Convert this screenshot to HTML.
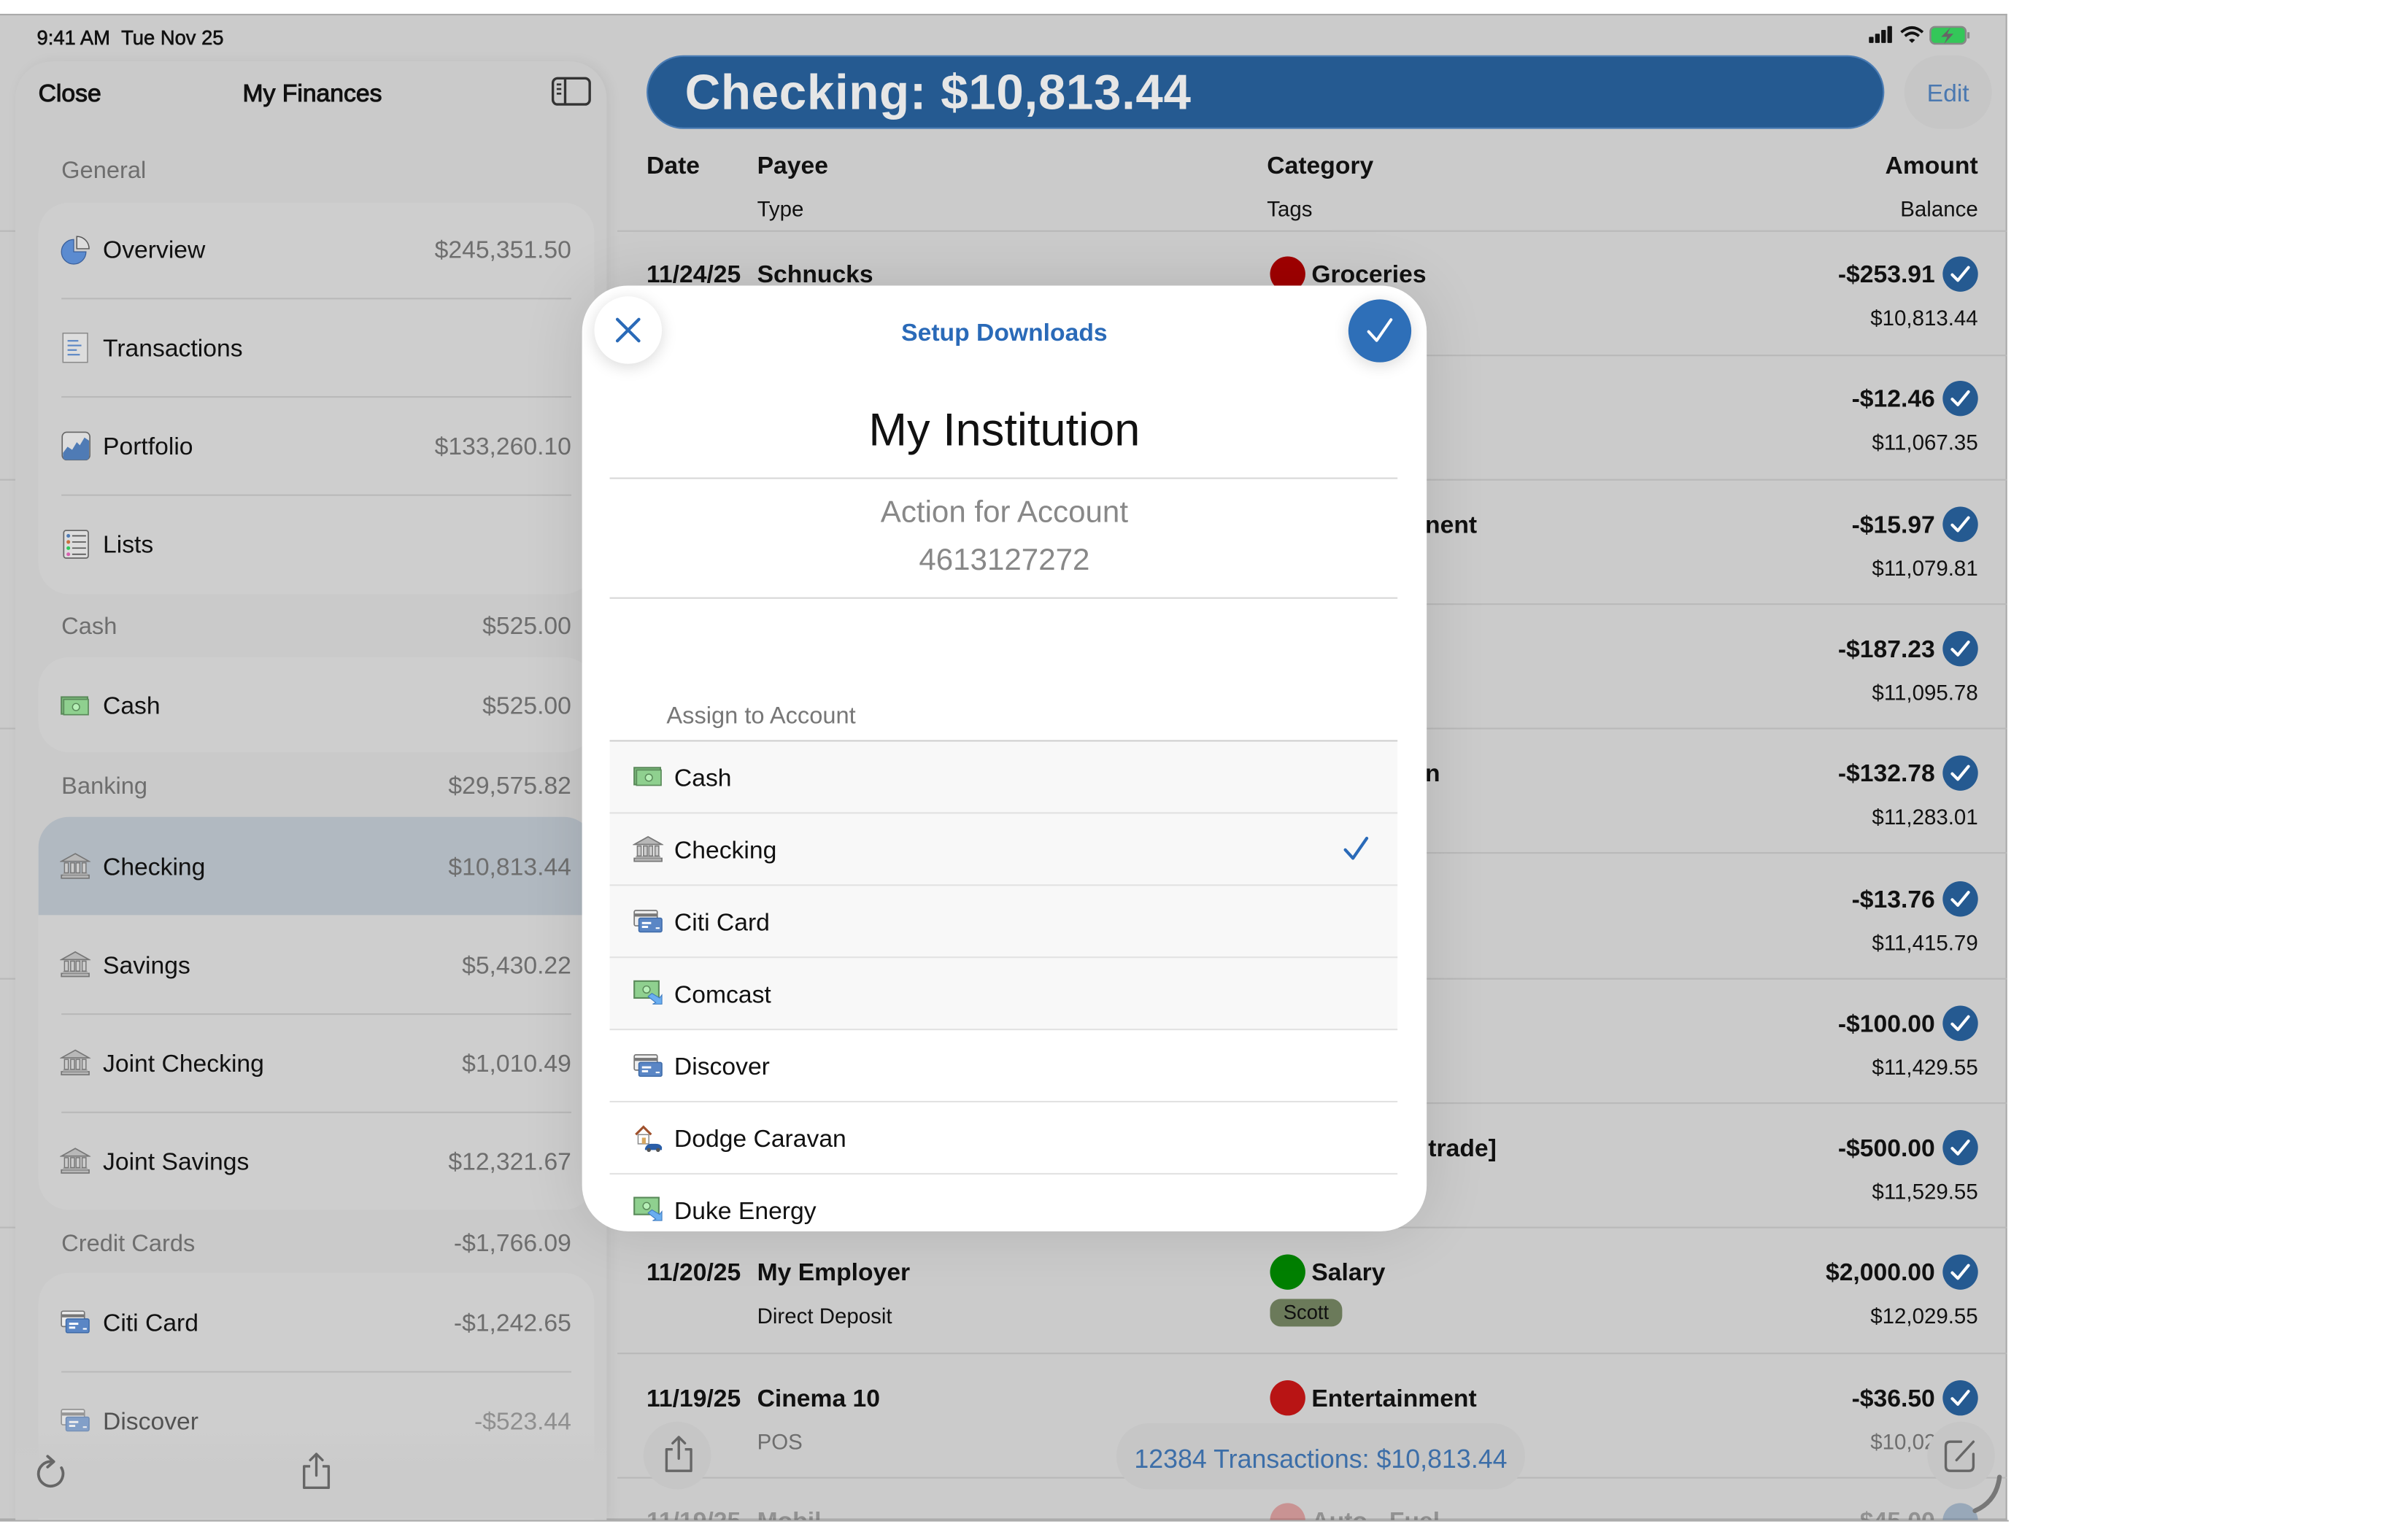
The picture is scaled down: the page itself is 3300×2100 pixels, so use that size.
<!DOCTYPE html>
<html><head><meta charset="utf-8">
<style>
*{margin:0;padding:0;box-sizing:border-box}
html,body{width:3300px;height:2100px;overflow:hidden;background:#fff}
#s{position:absolute;left:0;top:0;width:1568px;height:998px;transform:scale(2.10459);transform-origin:0 0;font-family:"Liberation Sans",sans-serif;color:#111;overflow:hidden}
.a{position:absolute;white-space:nowrap}
.t{position:absolute;white-space:nowrap;line-height:20px;height:20px;margin-top:1.5px}
.r{text-align:right}
.g{color:#6e6e6e}
.sep{position:absolute;height:1px;background:#b9b9b9}
.ck{position:absolute;width:23px;height:23px;border-radius:50%;background:#255a91}
.dot{position:absolute;width:23px;height:23px;border-radius:50%}
.ms{position:absolute;height:1px;background:#e2e2e2;left:18px;width:513px}
</style></head><body>
<svg width="0" height="0" style="position:absolute">
<defs>
<symbol id="bank" viewBox="0 0 20 20"><path d="M10 2 L19 7 H1 Z" fill="#b8b8b8" stroke="#777" stroke-width=".8"/><rect x="1" y="16" width="18" height="2" fill="#b8b8b8" stroke="#777" stroke-width=".8"/><rect x="2" y="14.5" width="16" height="1.5" fill="#aaa"/><g fill="#ccc" stroke="#777" stroke-width=".7"><rect x="3" y="8" width="2.5" height="6.5"/><rect x="7" y="8" width="2.5" height="6.5"/><rect x="10.5" y="8" width="2.5" height="6.5"/><rect x="14.5" y="8" width="2.5" height="6.5"/></g></symbol>
<symbol id="cash" viewBox="0 0 20 20"><rect x="1" y="4" width="17" height="11" fill="#7fbf7f" stroke="#5a8a5a"/><rect x="2.5" y="5.5" width="16" height="10" fill="#8fd08f" stroke="#5a8a5a" stroke-width=".8"/><circle cx="10.5" cy="10.5" r="2.3" fill="#b7f0b7" stroke="#5a8a5a" stroke-width=".7"/></symbol>
<symbol id="card" viewBox="0 0 20 20"><rect x="1" y="3" width="15" height="10" rx="1" fill="#eee" stroke="#777" stroke-width=".8"/><rect x="1" y="5" width="15" height="2" fill="#777"/><rect x="4" y="8" width="15" height="9" rx="1" fill="#5a86c5" stroke="#3d6aa8" stroke-width=".7"/><rect x="6" y="10.5" width="6" height="1.4" fill="#fff"/><rect x="6" y="13" width="4" height="1.4" fill="#fff"/><rect x="15" y="14" width="2.5" height="1" fill="#fff"/></symbol>
<symbol id="bill" viewBox="0 0 20 20"><rect x="1" y="2" width="16" height="11" fill="#8fd08f" stroke="#5a8a5a"/><circle cx="9" cy="7.5" r="2.3" fill="#b7f0b7" stroke="#5a8a5a" stroke-width=".7"/><path d="M10 12 L15 16 L13 17 H19 V11 L17.5 13 L12.5 10 Z" fill="#6aaef0" stroke="#3d7ac0" stroke-width=".5"/></symbol>
<symbol id="house" viewBox="0 0 20 20"><path d="M2 8 L7 3 L12 8" fill="none" stroke="#a0522d" stroke-width="1.5"/><rect x="3.5" y="8" width="7" height="6" fill="#fff" stroke="#888" stroke-width=".7"/><rect x="6" y="10" width="2.5" height="4" fill="#d9a860"/><path d="M8 17 Q9 14 12 14 L15 14 Q18 14 19 16 V18 H8 Z" fill="#2a5ea8"/><circle cx="10.5" cy="18" r="1.3" fill="#555"/><circle cx="16.5" cy="18" r="1.3" fill="#555"/></symbol>
<symbol id="okc" viewBox="0 0 24 24"><path d="M6.5 12.5 L10.3 16.3 L17.5 7.5" fill="none" stroke="#fff" stroke-width="2" stroke-linecap="round" stroke-linejoin="round"/></symbol>
</defs></svg>
<div id="s">
<div class="a" style="left:0;top:8.6px;width:1307px;height:981px;background:#cbcbcb;border-top:1px solid #aaa;border-right:1px solid #aaa;border-bottom:1px solid #aaa"></div>
<div class="sep" style="left:0;top:150px;width:10px"></div>
<div class="sep" style="left:0;top:312px;width:10px"></div>
<div class="sep" style="left:0;top:474px;width:10px"></div>
<div class="sep" style="left:0;top:637px;width:10px"></div>
<div class="sep" style="left:0;top:799px;width:10px"></div>
<div class="a" style="left:10px;top:40px;width:385px;height:950px;background:#cacaca;border-radius:24px 24px 0 0;box-shadow:2px 0 8px rgba(0,0,0,.06)"></div>
<div class="t" style="left:24px;top:13px;font-size:13px;color:#111;-webkit-text-stroke:.3px #111">9:41 AM&nbsp;&nbsp;Tue Nov 25</div>
<div class="t" style="left:25px;top:50px;font-size:16px;-webkit-text-stroke:.5px #111">Close</div>
<div class="t" style="left:158px;top:50px;font-size:16px;-webkit-text-stroke:.5px #111">My Finances</div>
<svg class="a" style="left:359px;top:50px" width="26" height="20" viewBox="0 0 26 20"><rect x="1" y="1" width="24" height="17" rx="3" fill="none" stroke="#333" stroke-width="1.6"/><line x1="9" y1="1" x2="9" y2="18" stroke="#333" stroke-width="1.6"/><g stroke="#333" stroke-width="1.3"><line x1="3.5" y1="5" x2="6.5" y2="5"/><line x1="3.5" y1="8" x2="6.5" y2="8"/><line x1="3.5" y1="11" x2="6.5" y2="11"/></g></svg>

<div class="t g" style="left:40px;top:100px;font-size:15.5px">General</div>
<div class="a" style="left:25px;top:132px;width:362px;height:255px;background:#cecece;border-radius:20px"></div>
<svg class="a" style="left:39px;top:153px" width="20" height="20" viewBox="0 0 20 20"><path d="M9 3 A8 8 0 1 0 17 11 H9 Z" fill="#5b8bd0" stroke="#3a5f9a" stroke-width=".6"/><path d="M11 1 A8 8 0 0 1 19 9 H11 Z" fill="#ddd" stroke="#555" stroke-width=".7"/></svg>
<div class="t" style="left:67px;top:152px;font-size:16px">Overview</div>
<div class="t g r" style="right:1196px;top:152px;font-size:16px">$245,351.50</div>
<div class="sep" style="left:40px;top:194px;width:332px"></div>
<svg class="a" style="left:40px;top:216px" width="18" height="21" viewBox="0 0 18 21"><rect x="1" y="1" width="16" height="19" fill="#ddd" stroke="#888" stroke-width=".7"/><g stroke="#5a86c5" stroke-width="1"><line x1="4" y1="6" x2="11" y2="6"/><line x1="4" y1="9" x2="13" y2="9"/><line x1="4" y1="12" x2="10" y2="12"/><line x1="4" y1="15" x2="12" y2="15"/></g></svg>
<div class="t" style="left:67px;top:216px;font-size:16px">Transactions</div>
<div class="sep" style="left:40px;top:258px;width:332px"></div>
<svg class="a" style="left:40px;top:281px" width="19" height="19" viewBox="0 0 19 19"><rect x=".5" y=".5" width="18" height="18" rx="3" fill="#ddd" stroke="#666" stroke-width=".8"/><path d="M1 14 L4 10 L7 12 L10 7 L12 9 L15 4 L18 6 V16 Q18 18.5 16 18.5 H3 Q1 18.5 1 16 Z" fill="#4f7bb5"/></svg>
<div class="t" style="left:67px;top:280px;font-size:16px">Portfolio</div>
<div class="t g r" style="right:1196px;top:280px;font-size:16px">$133,260.10</div>
<div class="sep" style="left:40px;top:322px;width:332px"></div>
<svg class="a" style="left:41px;top:345px" width="17" height="19" viewBox="0 0 17 19"><rect x=".5" y=".5" width="16" height="18" rx="1.5" fill="#ddd" stroke="#666" stroke-width=".8"/><circle cx="3.5" cy="4" r="1.2" fill="#4f7bb5"/><circle cx="3.5" cy="8" r="1.2" fill="#c9703f"/><circle cx="3.5" cy="12" r="1.2" fill="#2ec95b"/><circle cx="3.5" cy="16" r="1.2" fill="#d860b0"/><g stroke="#555" stroke-width=".8"><line x1="6" y1="4" x2="15" y2="4"/><line x1="6" y1="8" x2="15" y2="8"/><line x1="6" y1="12" x2="15" y2="12"/><line x1="6" y1="16" x2="15" y2="16"/></g></svg>
<div class="t" style="left:67px;top:344px;font-size:16px">Lists</div>

<div class="t g" style="left:40px;top:397px;font-size:15.5px">Cash</div>
<div class="t g r" style="right:1196px;top:397px;font-size:16px">$525.00</div>
<div class="a" style="left:25px;top:428px;width:362px;height:62px;background:#cecece;border-radius:20px"></div>
<svg class="a" style="left:39px;top:450px" width="20" height="20"><use href="#cash"/></svg>
<div class="t" style="left:67px;top:449px;font-size:16px">Cash</div>
<div class="t g r" style="right:1196px;top:449px;font-size:16px">$525.00</div>

<div class="t g" style="left:40px;top:501px;font-size:15.5px">Banking</div>
<div class="t g r" style="right:1196px;top:501px;font-size:16px">$29,575.82</div>
<div class="a" style="left:25px;top:532px;width:362px;height:256px;background:#cecece;border-radius:20px;overflow:hidden"><div style="height:64px;background:#b1b9c1"></div></div>
<svg class="a" style="left:39px;top:554px" width="20" height="20"><use href="#bank"/></svg>
<div class="t" style="left:67px;top:554px;font-size:16px">Checking</div>
<div class="t g r" style="right:1196px;top:554px;font-size:16px">$10,813.44</div>
<svg class="a" style="left:39px;top:618px" width="20" height="20"><use href="#bank"/></svg>
<div class="t" style="left:67px;top:618px;font-size:16px">Savings</div>
<div class="t g r" style="right:1196px;top:618px;font-size:16px">$5,430.22</div>
<div class="sep" style="left:40px;top:660px;width:332px"></div>
<svg class="a" style="left:39px;top:682px" width="20" height="20"><use href="#bank"/></svg>
<div class="t" style="left:67px;top:682px;font-size:16px">Joint Checking</div>
<div class="t g r" style="right:1196px;top:682px;font-size:16px">$1,010.49</div>
<div class="sep" style="left:40px;top:724px;width:332px"></div>
<svg class="a" style="left:39px;top:746px" width="20" height="20"><use href="#bank"/></svg>
<div class="t" style="left:67px;top:746px;font-size:16px">Joint Savings</div>
<div class="t g r" style="right:1196px;top:746px;font-size:16px">$12,321.67</div>

<div class="t g" style="left:40px;top:799px;font-size:15.5px">Credit Cards</div>
<div class="t g r" style="right:1196px;top:799px;font-size:16px">-$1,766.09</div>
<div class="a" style="left:25px;top:829px;width:362px;height:161px;background:#cecece;border-radius:20px 20px 0 0"></div>
<svg class="a" style="left:39px;top:851px" width="20" height="20"><use href="#card"/></svg>
<div class="t" style="left:67px;top:851px;font-size:16px">Citi Card</div>
<div class="t g r" style="right:1196px;top:851px;font-size:16px">-$1,242.65</div>
<div class="sep" style="left:40px;top:893px;width:332px"></div>
<div style="opacity:.65">
<svg class="a" style="left:39px;top:915px" width="20" height="20"><use href="#card"/></svg>
<div class="t" style="left:67px;top:915px;font-size:16px">Discover</div>
<div class="t g r" style="right:1196px;top:915px;font-size:16px">-$523.44</div>
</div>
<div class="a" style="left:10px;top:930px;width:385px;height:59px;background:linear-gradient(rgba(203,203,203,0),#cbcbcb 40%)"></div>
<svg class="a" style="left:23px;top:947px" width="22" height="24" viewBox="0 0 22 24"><path d="M17 9 A8 8 0 1 1 11 5" fill="none" stroke="#666" stroke-width="1.8" stroke-linecap="round"/><path d="M8 1.5 L12 5 L8 8.5" fill="none" stroke="#666" stroke-width="1.8" stroke-linecap="round" stroke-linejoin="round"/></svg>
<svg class="a" style="left:195px;top:945px" width="22" height="26" viewBox="0 0 22 26"><path d="M7 10 H3 V24 H19 V10 H15" fill="none" stroke="#666" stroke-width="1.6" stroke-linejoin="round"/><path d="M11 16 V2 M7 6 L11 2 L15 6" fill="none" stroke="#666" stroke-width="1.6" stroke-linecap="round" stroke-linejoin="round"/></svg>

<svg class="a" style="left:1216px;top:16px" width="70" height="14" viewBox="0 0 70 14"><g fill="#111"><rect x="1" y="8" width="3" height="4" rx=".5"/><rect x="5" y="6" width="3" height="6" rx=".5"/><rect x="9" y="3.5" width="3" height="8.5" rx=".5"/><rect x="13" y="1" width="3" height="11" rx=".5"/></g><path d="M22 5 Q29 -1 36 5" fill="none" stroke="#111" stroke-width="1.8"/><path d="M24.5 7.5 Q29 3.5 33.5 7.5" fill="none" stroke="#111" stroke-width="1.8"/><path d="M27 10 L29 12 L31 10 Q29 8.5 27 10 Z" fill="#111"/><rect x="41" y="1.5" width="23" height="11" rx="3" fill="#34c759" stroke="#888" stroke-width="1.2"/><rect x="65" y="5" width="1.5" height="4" fill="#888"/><path d="M54 2 L48 8 H52 L50 12.5 L56 6 H52 Z" fill="#666"/></svg>

<div class="a" style="left:421px;top:36px;width:806px;height:48px;background:#255a91;border-radius:24px;border:1px solid #4a7cb4"></div>
<div class="a" style="left:446px;top:41px;font-size:32px;font-weight:bold;color:#e6e6e6;line-height:38px;letter-spacing:.3px">Checking: $10,813.44</div>
<div class="a" style="left:1240px;top:36px;width:57px;height:48px;background:#c6c6c6;border-radius:24px"></div>
<div class="t" style="left:1240px;top:50px;width:57px;text-align:center;font-size:16px;color:#4a78b0">Edit</div>

<div class="t" style="left:421px;top:97px;font-size:16px;font-weight:bold;color:#111">Date</div>
<div class="t" style="left:493px;top:97px;font-size:16px;font-weight:bold;color:#111">Payee</div>
<div class="t" style="left:825px;top:97px;font-size:16px;font-weight:bold;color:#111">Category</div>
<div class="t r" style="right:280px;top:97px;font-size:16px;font-weight:bold;color:#111">Amount</div>
<div class="t" style="left:493px;top:124px;font-size:14px">Type</div>
<div class="t" style="left:825px;top:124px;font-size:14px">Tags</div>
<div class="t r" style="right:280px;top:124px;font-size:14px">Balance</div>
<div class="sep" style="left:402px;top:150px;width:905px"></div>
<div class="sep" style="left:402px;top:231px;width:905px"></div>
<div class="sep" style="left:402px;top:312px;width:905px"></div>
<div class="sep" style="left:402px;top:393px;width:905px"></div>
<div class="sep" style="left:402px;top:474px;width:905px"></div>
<div class="sep" style="left:402px;top:555px;width:905px"></div>
<div class="sep" style="left:402px;top:637px;width:905px"></div>
<div class="sep" style="left:402px;top:718px;width:905px"></div>
<div class="sep" style="left:402px;top:799px;width:905px"></div>
<div class="sep" style="left:402px;top:881px;width:905px"></div>
<div class="sep" style="left:402px;top:962px;width:905px"></div>

<div class="t" style="left:421px;top:168px;font-size:16px;font-weight:bold">11/24/25</div>
<div class="t" style="left:493px;top:168px;font-size:16px;font-weight:bold">Schnucks</div>
<div class="dot" style="left:827px;top:167px;background:#a00000"></div>
<div class="t" style="left:854px;top:168px;font-size:16px;font-weight:bold">Groceries</div>

<div class="t" style="left:928px;top:331px;font-size:16px;font-weight:bold">nent</div>
<div class="t" style="left:928px;top:493px;font-size:16px;font-weight:bold">n</div>
<div class="t" style="left:930px;top:737px;font-size:16px;font-weight:bold">trade]</div>

<div class="t r" style="right:308px;top:168px;font-size:16px;font-weight:bold">-$253.91</div>
<div class="t r" style="right:280px;top:195px;font-size:14px">$10,813.44</div>
<div class="t r" style="right:308px;top:249px;font-size:16px;font-weight:bold">-$12.46</div>
<div class="t r" style="right:280px;top:276px;font-size:14px">$11,067.35</div>
<div class="t r" style="right:308px;top:331px;font-size:16px;font-weight:bold">-$15.97</div>
<div class="t r" style="right:280px;top:358px;font-size:14px">$11,079.81</div>
<div class="t r" style="right:308px;top:412px;font-size:16px;font-weight:bold">-$187.23</div>
<div class="t r" style="right:280px;top:439px;font-size:14px">$11,095.78</div>
<div class="t r" style="right:308px;top:493px;font-size:16px;font-weight:bold">-$132.78</div>
<div class="t r" style="right:280px;top:520px;font-size:14px">$11,283.01</div>
<div class="t r" style="right:308px;top:575px;font-size:16px;font-weight:bold">-$13.76</div>
<div class="t r" style="right:280px;top:602px;font-size:14px">$11,415.79</div>
<div class="t r" style="right:308px;top:656px;font-size:16px;font-weight:bold">-$100.00</div>
<div class="t r" style="right:280px;top:683px;font-size:14px">$11,429.55</div>
<div class="t r" style="right:308px;top:737px;font-size:16px;font-weight:bold">-$500.00</div>
<div class="t r" style="right:280px;top:764px;font-size:14px">$11,529.55</div>
<div class="t r" style="right:308px;top:818px;font-size:16px;font-weight:bold">$2,000.00</div>
<div class="t r" style="right:280px;top:845px;font-size:14px">$12,029.55</div>
<div class="t r" style="right:308px;top:900px;font-size:16px;font-weight:bold">-$36.50</div>
<div class="t r g" style="right:280px;top:927px;font-size:14px">$10,029.05</div>

<svg class="ck" style="left:1265px;top:167px" viewBox="0 0 24 24"><use href="#okc"/></svg>
<svg class="ck" style="left:1265px;top:248px" viewBox="0 0 24 24"><use href="#okc"/></svg>
<svg class="ck" style="left:1265px;top:330px" viewBox="0 0 24 24"><use href="#okc"/></svg>
<svg class="ck" style="left:1265px;top:411px" viewBox="0 0 24 24"><use href="#okc"/></svg>
<svg class="ck" style="left:1265px;top:492px" viewBox="0 0 24 24"><use href="#okc"/></svg>
<svg class="ck" style="left:1265px;top:574px" viewBox="0 0 24 24"><use href="#okc"/></svg>
<svg class="ck" style="left:1265px;top:655px" viewBox="0 0 24 24"><use href="#okc"/></svg>
<svg class="ck" style="left:1265px;top:736px" viewBox="0 0 24 24"><use href="#okc"/></svg>
<svg class="ck" style="left:1265px;top:817px" viewBox="0 0 24 24"><use href="#okc"/></svg>
<svg class="ck" style="left:1265px;top:899px" viewBox="0 0 24 24"><use href="#okc"/></svg>

<div class="t" style="left:421px;top:818px;font-size:16px;font-weight:bold">11/20/25</div>
<div class="t" style="left:493px;top:818px;font-size:16px;font-weight:bold">My Employer</div>
<div class="t" style="left:493px;top:845px;font-size:14px">Direct Deposit</div>
<div class="dot" style="left:827px;top:817px;background:#008000"></div>
<div class="t" style="left:854px;top:818px;font-size:16px;font-weight:bold">Salary</div>
<div class="a" style="left:827px;top:846px;width:47px;height:18px;background:#6b7a5a;border-radius:7px;font-size:13px;line-height:18px;text-align:center;color:#111">Scott</div>

<div class="t" style="left:421px;top:900px;font-size:16px;font-weight:bold">11/19/25</div>
<div class="t" style="left:493px;top:900px;font-size:16px;font-weight:bold">Cinema 10</div>
<div class="t g" style="left:493px;top:927px;font-size:14px">POS</div>
<div class="dot" style="left:827px;top:899px;background:#b81414"></div>
<div class="t" style="left:854px;top:900px;font-size:16px;font-weight:bold">Entertainment</div>

<div style="opacity:.3">
<div class="t" style="left:421px;top:980px;font-size:16px;font-weight:bold">11/19/25</div>
<div class="t" style="left:493px;top:980px;font-size:16px;font-weight:bold">Mobil</div>
<div class="dot" style="left:827px;top:979px;background:#c81414"></div>
<div class="t" style="left:854px;top:980px;font-size:16px;font-weight:bold">Auto - Fuel</div>
<div class="t r" style="right:308px;top:980px;font-size:16px;font-weight:bold">-$45.00</div>
<div class="ck" style="left:1265px;top:979px"></div>
</div>
<div class="a" style="left:0;top:990px;width:1568px;height:10px;background:#fff"></div>
<div class="a" style="left:0;top:989.5px;width:1308px;height:1px;background:#aaa"></div>

<div class="a" style="left:419px;top:926px;width:44px;height:44px;border-radius:50%;background:#c6c6c6"></div>
<svg class="a" style="left:431px;top:934px" width="22" height="26" viewBox="0 0 22 26"><path d="M7 10 H3 V24 H19 V10 H15" fill="none" stroke="#666" stroke-width="1.6" stroke-linejoin="round"/><path d="M11 16 V2 M7 6 L11 2 L15 6" fill="none" stroke="#666" stroke-width="1.6" stroke-linecap="round" stroke-linejoin="round"/></svg>
<div class="a" style="left:727px;top:927px;width:266px;height:43px;border-radius:21px;background:#c6c6c6"></div>
<div class="t" style="left:727px;top:939px;width:266px;text-align:center;font-size:17px;color:#3c6ea8">12384 Transactions: $10,813.44</div>
<div class="a" style="left:1255px;top:926px;width:44px;height:44px;border-radius:50%;background:#c6c6c6"></div>
<svg class="a" style="left:1265px;top:936px" width="24" height="24" viewBox="0 0 24 24"><path d="M12 3 H5 Q2 3 2 6 V19 Q2 22 5 22 H17 Q20 22 20 19 V11" fill="none" stroke="#666" stroke-width="1.6" stroke-linecap="round"/><path d="M9 15 L20 3" stroke="#666" stroke-width="1.6" stroke-linecap="round"/></svg>
<svg class="a" style="left:1280px;top:958px" width="26" height="30" viewBox="0 0 26 30"><path d="M22 4 Q20 20 6 26" fill="none" stroke="#777" stroke-width="3" stroke-linecap="round"/></svg>

<div class="a" style="left:379px;top:186px;width:550px;height:616px;background:#fff;border-radius:30px;box-shadow:0 0 40px rgba(0,0,0,.12);overflow:hidden">
  <div class="a" style="left:8px;top:7px;width:44px;height:44px;border-radius:50%;background:#fff;box-shadow:0 2px 10px rgba(0,0,0,.15)"></div>
  <svg class="a" style="left:20px;top:19px" width="20" height="20" viewBox="0 0 20 20"><path d="M3 3 L17 17 M17 3 L3 17" stroke="#2a6ab8" stroke-width="2" stroke-linecap="round"/></svg>
  <div class="t" style="left:0;top:20px;width:550px;text-align:center;font-size:16px;font-weight:bold;color:#2a6ab8">Setup Downloads</div>
  <div class="a" style="left:499px;top:9px;width:41px;height:41px;border-radius:50%;background:#2e6fb8;box-shadow:0 2px 10px rgba(0,0,0,.15)"></div>
  <svg class="a" style="left:507px;top:17px" width="25" height="25" viewBox="0 0 24 24"><path d="M5 12.5 L10 18 L19 5" fill="none" stroke="#fff" stroke-width="1.8" stroke-linecap="round" stroke-linejoin="round"/></svg>
  <div class="a" style="left:0;top:75px;width:550px;text-align:center;font-size:30px;line-height:40px;color:#111">My Institution</div>
  <div class="ms" style="top:125px;background:#d8d8d8"></div>
  <div class="a" style="left:0;top:135px;width:550px;text-align:center;font-size:20px;line-height:26px;color:#888">Action for Account</div>
  <div class="a" style="left:0;top:166px;width:550px;text-align:center;font-size:20px;line-height:26px;color:#888">4613127272</div>
  <div class="ms" style="top:203px;background:#d8d8d8"></div>
  <div class="t" style="left:55px;top:269px;font-size:15.5px;color:#777">Assign to Account</div>
  <div class="a" style="left:18px;top:296px;width:513px;height:188px;background:#f8f8f8"></div>
  <div class="ms" style="top:296px;background:#cfcfcf"></div>
  <div class="ms" style="top:343px"></div>
  <div class="ms" style="top:390px"></div>
  <div class="ms" style="top:437px"></div>
  <div class="ms" style="top:484px"></div>
  <div class="ms" style="top:531px"></div>
  <div class="ms" style="top:578px"></div>
  <svg class="a" style="left:33px;top:310px" width="20" height="20"><use href="#cash"/></svg>
  <div class="t" style="left:60px;top:310px;font-size:16px">Cash</div>
  <svg class="a" style="left:33px;top:357px" width="20" height="20"><use href="#bank"/></svg>
  <div class="t" style="left:60px;top:357px;font-size:16px">Checking</div>
  <svg class="a" style="left:495px;top:358px" width="18" height="18" viewBox="0 0 18 18"><path d="M2 9.5 L7 15 L16 2" fill="none" stroke="#2a6ab8" stroke-width="2" stroke-linecap="round" stroke-linejoin="round"/></svg>
  <svg class="a" style="left:33px;top:404px" width="20" height="20"><use href="#card"/></svg>
  <div class="t" style="left:60px;top:404px;font-size:16px">Citi Card</div>
  <svg class="a" style="left:33px;top:451px" width="20" height="20"><use href="#bill"/></svg>
  <div class="t" style="left:60px;top:451px;font-size:16px">Comcast</div>
  <svg class="a" style="left:33px;top:498px" width="20" height="20"><use href="#card"/></svg>
  <div class="t" style="left:60px;top:498px;font-size:16px">Discover</div>
  <svg class="a" style="left:33px;top:545px" width="20" height="20"><use href="#house"/></svg>
  <div class="t" style="left:60px;top:545px;font-size:16px">Dodge Caravan</div>
  <svg class="a" style="left:33px;top:592px" width="20" height="20"><use href="#bill"/></svg>
  <div class="t" style="left:60px;top:592px;font-size:16px">Duke Energy</div>
</div>
</div>
</body></html>
